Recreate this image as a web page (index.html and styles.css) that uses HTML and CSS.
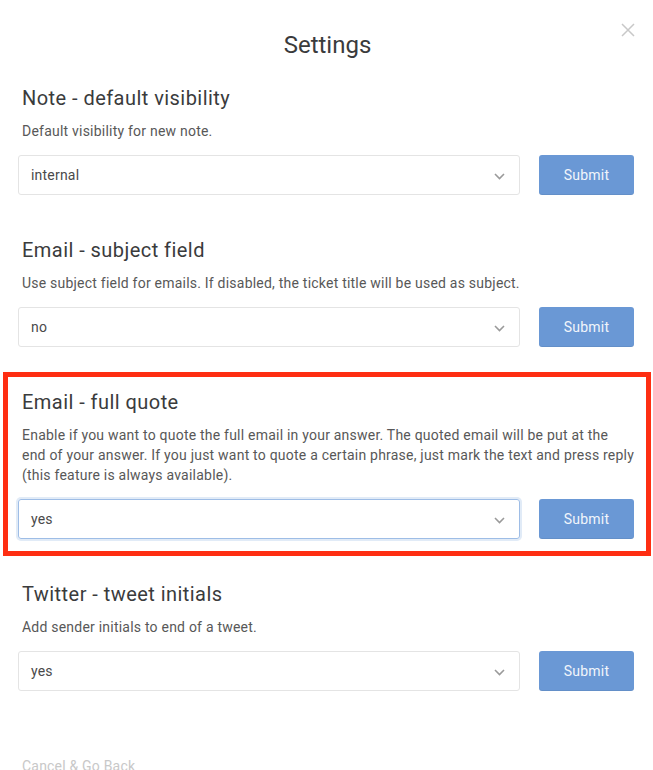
FILE: index.html
```html
<!DOCTYPE html>
<html>
<head>
<meta charset="utf-8">
<link rel="stylesheet" href="styles.css">
</head>
<body>
<div class="modal">
  <div class="close" aria-label="close">
    <svg width="14" height="14" viewBox="0 0 14 14"><path d="M1 1 L13 13 M13 1 L1 13" stroke="#c8c8c8" stroke-width="1.5" fill="none"/></svg>
  </div>
  <h1 class="title">Settings</h1>

  <section class="setting">
    <h2 class="setting-title">Note - default visibility</h2>
    <p class="setting-desc">Default visibility for new note.</p>
    <div class="row">
      <div class="select"><span>internal</span><svg class="chev" width="11" height="7" viewBox="0 0 11 7"><path d="M1 1 L5.5 5.5 L10 1" stroke="#9a9a9a" stroke-width="1.6" fill="none"/></svg></div>
      <button class="submit">Submit</button>
    </div>
  </section>

  <section class="setting">
    <h2 class="setting-title">Email - subject field</h2>
    <p class="setting-desc">Use subject field for emails. If disabled, the ticket title will be used as subject.</p>
    <div class="row">
      <div class="select"><span>no</span><svg class="chev" width="11" height="7" viewBox="0 0 11 7"><path d="M1 1 L5.5 5.5 L10 1" stroke="#9a9a9a" stroke-width="1.6" fill="none"/></svg></div>
      <button class="submit">Submit</button>
    </div>
  </section>

  <section class="setting highlighted">
    <h2 class="setting-title">Email - full quote</h2>
    <p class="setting-desc nowrap">Enable if you want to quote the full email in your answer. The quoted email will be put at the<br>end of your answer. If you just want to quote a certain phrase, just mark the text and press reply<br>(this feature is always available).</p>
    <div class="row">
      <div class="select focused"><span>yes</span><svg class="chev" width="11" height="7" viewBox="0 0 11 7"><path d="M1 1 L5.5 5.5 L10 1" stroke="#9a9a9a" stroke-width="1.6" fill="none"/></svg></div>
      <button class="submit">Submit</button>
    </div>
  </section>

  <section class="setting">
    <h2 class="setting-title">Twitter - tweet initials</h2>
    <p class="setting-desc">Add sender initials to end of a tweet.</p>
    <div class="row">
      <div class="select"><span>yes</span><svg class="chev" width="11" height="7" viewBox="0 0 11 7"><path d="M1 1 L5.5 5.5 L10 1" stroke="#9a9a9a" stroke-width="1.6" fill="none"/></svg></div>
      <button class="submit">Submit</button>
    </div>
  </section>

  <div class="footer"><a class="cancel">Cancel &amp; Go Back</a></div>
</div>
</body>
</html>
```
FILE: styles.css
```css
html, body {
  margin: 0;
  padding: 0;
  background: #fff;
}
body {
  font-family: "Roboto", "Liberation Sans", sans-serif;
  color: #38393a;
  height: 770px;
  overflow: hidden;
}
.modal {
  position: relative;
  padding: 30px 19px 0 18px;
}
.close {
  position: absolute;
  top: 23px;
  left: 621px;
  width: 14px;
  height: 14px;
  line-height: 0;
}
.title {
  margin: 0;
  text-align: center;
  font-size: 24px;
  font-weight: 400;
  line-height: 30px;
  color: #3a3b3c;
  padding-left: 3px;
}
.setting {
  position: relative;
  margin-top: 26px;
}
.setting + .setting {
  margin-top: 43px;
}
.setting-title {
  margin: 0 0 0 4px;
  font-size: 20px;
  font-weight: 400;
  line-height: 24px;
  letter-spacing: 0.45px;
  color: #3a3b3c;
}
.setting-desc {
  margin: 11px 0 14px 4px;
  font-size: 14px;
  line-height: 20px;
  letter-spacing: 0.22px;
  color: #585858;
}
.setting-desc.nowrap {
  white-space: nowrap;
}
.row {
  display: flex;
  gap: 19px;
  height: 40px;
}
.select {
  flex: 1;
  box-sizing: border-box;
  height: 40px;
  border: 1px solid #e4e4e4;
  border-radius: 3px;
  display: flex;
  align-items: center;
  justify-content: space-between;
  padding: 0 14px 0 12px;
  font-size: 14px;
  letter-spacing: 0.2px;
  color: #4a4a4a;
}
.select.focused {
  border-color: #9ebde6;
  box-shadow: 0 0 0 2px #e1ebf7;
}
.chev {
  display: block;
  margin-top: 2px;
}
.submit {
  width: 95px;
  height: 40px;
  border: none;
  border-radius: 3px;
  background: #6a98d5;
  color: #f1f5fb;
  font-family: inherit;
  font-size: 14px;
  letter-spacing: 0.2px;
  padding: 0;
  box-shadow: inset 0 -1px 0 rgba(0,0,0,0.06);
}
.highlighted::before {
  content: "";
  position: absolute;
  left: -15px;
  right: -17px;
  top: -18px;
  bottom: -17px;
  border: 5px solid #fe2e12;
  pointer-events: none;
}
.footer {
  margin-top: 65px;
  padding-left: 4px;
}
.cancel {
  font-size: 14px;
  line-height: 20px;
  letter-spacing: 0.2px;
  color: #c8c8c8;
}
```
